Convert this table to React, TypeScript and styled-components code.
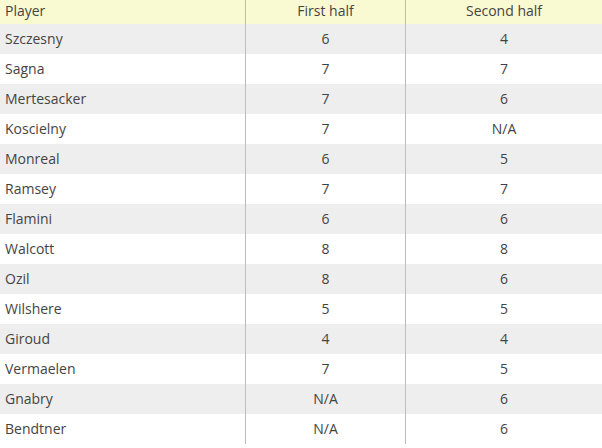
import React from "react";
import styled, { createGlobalStyle } from "styled-components";

const Global = createGlobalStyle`
  html, body { margin: 0; padding: 0; background: #fff; }
  body { font-family: "Open Sans", "Noto Sans", sans-serif; }
`;

const Table = styled.div`
  display: grid;
  grid-template-columns: 245px 160px 197px;
  width: 602px;
  font-size: 14px;
  color: #444;
`;

const HeadCell = styled.div<{ $align: "left" | "center"; $divider?: boolean }>`
  height: 24px;
  line-height: 21px;
  background: #fafad2;
  padding: 0 5px;
  text-align: ${(p) => p.$align};
  border-left: ${(p) => (p.$divider ? "1px solid #bbb" : "none")};
  box-sizing: border-box;
  white-space: nowrap;
`;

const Cell = styled.div<{ $align: "left" | "center"; $divider?: boolean; $odd: boolean }>`
  height: 30px;
  line-height: 30px;
  background: ${(p) => (p.$odd ? "#eeeeee" : "#ffffff")};
  padding: 0 5px;
  text-align: ${(p) => p.$align};
  border-left: ${(p) => (p.$divider ? "1px solid #bbb" : "none")};
  box-sizing: border-box;
  white-space: nowrap;
`;

const rows: [string, string, string][] = [
  ["Szczesny", "6", "4"],
  ["Sagna", "7", "7"],
  ["Mertesacker", "7", "6"],
  ["Koscielny", "7", "N/A"],
  ["Monreal", "6", "5"],
  ["Ramsey", "7", "7"],
  ["Flamini", "6", "6"],
  ["Walcott", "8", "8"],
  ["Ozil", "8", "6"],
  ["Wilshere", "5", "5"],
  ["Giroud", "4", "4"],
  ["Vermaelen", "7", "5"],
  ["Gnabry", "N/A", "6"],
  ["Bendtner", "N/A", "6"],
];

export default function App() {
  return (
    <>
      <Global />
      <Table>
        <HeadCell $align="left">Player</HeadCell>
        <HeadCell $align="center" $divider>First half</HeadCell>
        <HeadCell $align="center" $divider>Second half</HeadCell>
        {rows.map(([name, a, b], i) => (
          <React.Fragment key={name}>
            <Cell $align="left" $odd={i % 2 === 0}>{name}</Cell>
            <Cell $align="center" $divider $odd={i % 2 === 0}>{a}</Cell>
            <Cell $align="center" $divider $odd={i % 2 === 0}>{b}</Cell>
          </React.Fragment>
        ))}
      </Table>
    </>
  );
}
